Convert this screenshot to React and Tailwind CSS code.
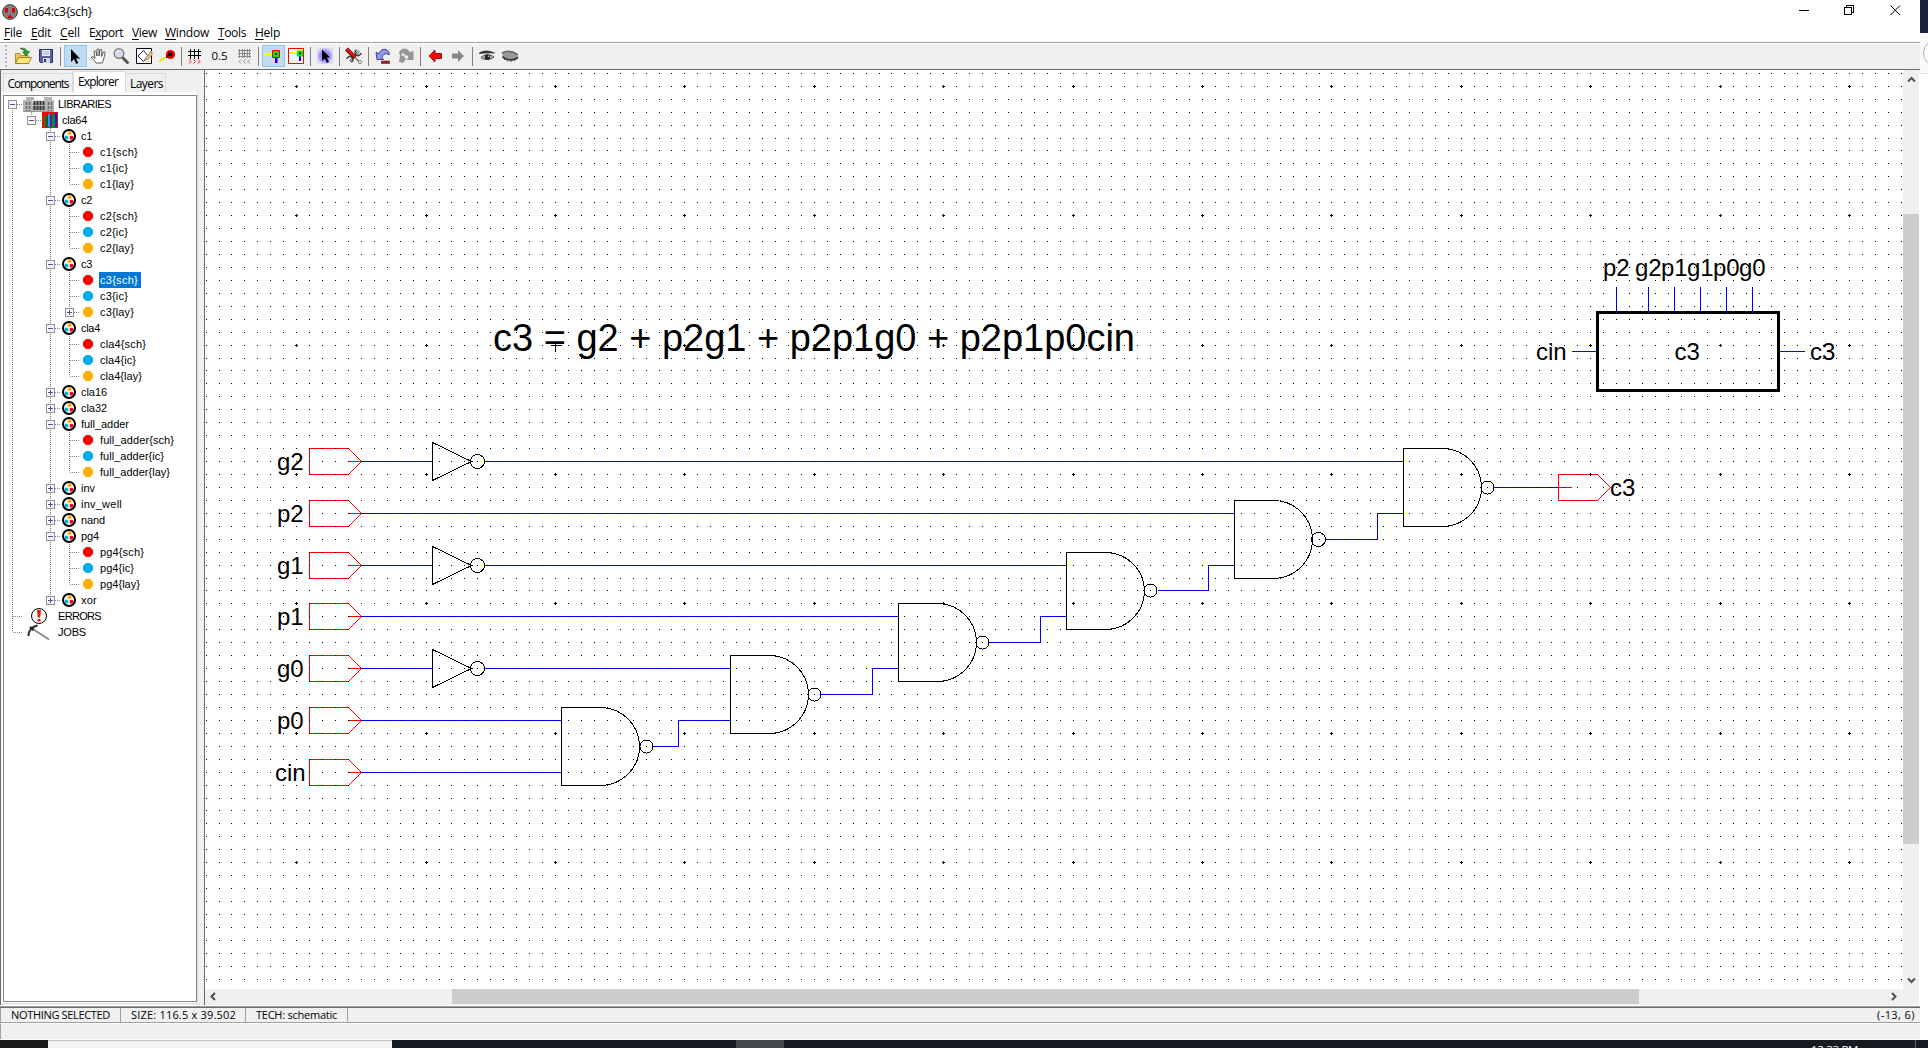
import { useLayoutEffect, useRef } from "react";

const UI = "font-['Open_Sans','Noto_Sans',sans-serif]";

/* Text whose tracking is tuned so that it spans a given width. */
function Fit({ w, className = "", children }) {
  const ref = useRef(null);
  useLayoutEffect(() => {
    const el = ref.current;
    el.style.letterSpacing = "0px";
    const n = el.textContent.length;
    const natural = el.getBoundingClientRect().width;
    el.style.letterSpacing = (w - natural) / n + "px";
  }, [w]);
  return (
    <span ref={ref} className={"inline-block whitespace-pre " + className}>
      {children}
    </span>
  );
}

/* ---------- toolbar ---------- */

function Ico({ children, size = 18 }) {
  return (
    <svg width={size} height={size} viewBox={`0 0 ${size} ${size}`} fill="none" className="shrink-0">
      {children}
    </svg>
  );
}

const OpenIcon = () => (
  <Ico>
    <path d="M1.500 16V6.500h4.500l1 2h7V16z" fill="#e8c94c" stroke="#9a7a20" strokeWidth=".8" />
    <path d="M1.500 16.500l3-6h13l-3 6z" fill="#ffe680" stroke="#8a6a10" strokeWidth=".8" />
    <path d="M6 1.500c4-1 6.500.5 7 3h2.500L12 9 8.500 5H11c-.6-1.600-2-2.600-5-3.500z" fill="#2fa02f" stroke="#176317" strokeWidth=".7" />
  </Ico>
);
const SaveIcon = () => (
  <Ico>
    <path d="M2.500 2.500h13v13h-12l-1-1z" fill="#5a62a4" stroke="#2b3270" />
    <path d="M5 3h8v6H5z" fill="#eef0f8" />
    <path d="M6 5h6M6 7h6" stroke="#a0a6c8" />
    <path d="M6 11h7v5H6z" fill="#d4d7e6" />
    <path d="M7 12h2v3H7z" fill="#2b3270" />
  </Ico>
);
const PointerIcon = () => (
  <Ico>
    <path d="M5 2v13l3-3 2.200 5 2-1-2.200-4.500H14z" fill="#000" />
  </Ico>
);
const HandIcon = () => (
  <Ico>
    <path
      d="M6 16c-1-2-4-4.500-4.500-6 .8-.8 2 0 3.500 1.500L4 4.500c.8-1 1.700-.6 2 .5l1 4V2.500c.5-1 1.700-1 2 0V9l1-6c.7-1 1.800-.6 1.800.5L11.500 9.500 13.500 5c1-.8 1.800 0 1.500 1-.8 4-1.500 8-3 10z"
      fill="#fff"
      stroke="#333"
      strokeWidth=".8"
    />
  </Ico>
);
const ZoomIcon = () => (
  <Ico>
    <path d="M10.500 10.500l5 5" stroke="#555" strokeWidth="3" strokeLinecap="round" />
    <circle cx="7" cy="6.500" r="4.800" fill="#d3dcec" stroke="#808080" strokeWidth="1.400" />
    <path d="M4.500 5.500A3 3 0 0 1 7 3.500" stroke="#fff" strokeWidth="1.300" />
  </Ico>
);
const EditIcon = () => (
  <Ico>
    <path d="M1.500 1.500h15v15h-15z" fill="#fff" stroke="#000" />
    <path d="M3 9l5.500-5.500L13 9l-4.500 5.500z" fill="#fff" stroke="#1a237e" />
    <path d="M16.500 3.500l.8 4-4 5-3 1 .8-3z" fill="#e2b980" stroke="#8a6030" strokeWidth=".5" />
    <path d="M10.500 13.500l2-.8 2 2.300h-4z" fill="#f3e6a0" />
  </Ico>
);
const WireIcon = () => (
  <Ico>
    <path d="M1 14.500c2-.5 3.500-3.500 7-4" stroke="#f2e200" strokeWidth="2.200" />
    <circle cx="12.500" cy="7.500" r="4.600" fill="#f00" />
    <path d="M10 5.500h4.500v4H10z" fill="#000" />
    <path d="M8 9l2-1.500 1 3-3 .5z" fill="#700" />
  </Ico>
);
function GridIcon({ ink, marks, dense }) {
  return (
    <Ico size={16}>
      {dense ? (
        <path d="M1 2.500h13M1 5.500h13M1 8.500h13M2.500 1v9M5.500 1v9M7.500 1v9M10.500 1v9M12.500 1v9" stroke={ink} strokeWidth="1" />
      ) : (
        <path d="M1 3.500h13M1 7.500h13M3.500 1v10M7.500 1v10M11.500 1v10" stroke={ink} />
      )}
      <path
        d={dense ? "M4 11.500l-2 2 2 2M8.500 11.500l-2 2 2 2M13 11.500l-2 2 2 2" : "M2 11.500l2 2-2 2M6.500 11.500l2 2-2 2M11 11.500l2 2-2 2"}
        stroke={marks}
      />
    </Ico>
  );
}
const PinA = () => (
  <Ico>
    <path d="M0 6h9v2.500H0z" fill="#ff0" />
    <path d="M10 10h2.500v6H10z" fill="#00f" />
    <path d="M7.500 3.500h7v7h-7z" fill="#0e0" stroke="#e00" />
    <path d="M10 6h2v2h-2z" fill="#000" />
  </Ico>
);
const PinB = () => (
  <Ico>
    <path d="M1.500 1.500h15v15h-15z" fill="#f8f8f8" stroke="#e00" />
    <path d="M2 5h9v2H2z" fill="#ff0" />
    <path d="M12 9h2v5h-2z" fill="#00f" />
    <path d="M10 3.500h6v6h-6z" fill="#0e0" />
    <path d="M12 5.500h2v2h-2z" fill="#000" />
  </Ico>
);
const SpecialPointer = () => (
  <Ico>
    <defs>
      <radialGradient id="glow">
        <stop offset="0" stopColor="#6c6cff" />
        <stop offset=".75" stopColor="#a4a4fb" />
        <stop offset="1" stopColor="#dcdcf8" />
      </radialGradient>
    </defs>
    <path d="M1 1h16v16H1z" fill="url(#glow)" />
    <path d="M6 2.500v11.500l2.800-2.600 2.200 4.600 2-1-2.200-4.400H14z" fill="#000" />
  </Ico>
);
const ToolsIcon = () => (
  <Ico>
    <path d="M14 4L5 14.500" stroke="#555" strokeWidth="2.400" />
    <path d="M14 4L5 14.500" stroke="#eee" strokeWidth="1" />
    <path d="M11.500 3a3 3 0 1 0 4.500 3M6.500 15A3 3 0 1 0 2 12" stroke="#444" strokeWidth="1.600" />
    <path d="M1.500 2l8.500 8.500" stroke="#8b0000" strokeWidth="4" />
    <path d="M2 2l8 8" stroke="#e01818" strokeWidth="2" />
    <path d="M10 10.500l5 5" stroke="#666" strokeWidth="1.300" />
    <circle cx="15" cy="15" r="1.600" fill="#fff" stroke="#666" strokeWidth=".8" />
  </Ico>
);
const UndoIcon = () => (
  <Ico>
    <path d="M2 5.500l1 7h6.500L8 10.500C9 7 11.500 6 15.500 7.500 14.500 1 7.500.5 5 6.500z" fill="#8c9ae8" stroke="#2a2f86" strokeWidth=".9" />
    <path d="M7.500 14h8v2.500h-8z" fill="#a02030" stroke="#701020" strokeWidth=".6" />
  </Ico>
);
const RedoIcon = () => (
  <Ico>
    <path d="M2 5c4-5 9-4 10.500 0l4-1v9H9l2.500-2.500C10.500 7.500 8 7.500 7 9l2 3-3 4-4-1 1-6z" fill="#959595" />
    <circle cx="6" cy="7.500" r="1.600" fill="#e8e8e8" />
  </Ico>
);
const ArrowLeftIcon = () => (
  <Ico>
    <path d="M3 9l6-6v3.500h6.500v5H9V15z" fill="#f00" stroke="#8b0000" strokeWidth=".8" />
  </Ico>
);
const ArrowRightIcon = () => (
  <Ico>
    <path d="M15 9L9 3v3.500H3v5h6V15z" fill="#888" />
  </Ico>
);
const EyeIcon = () => (
  <Ico>
    <path d="M1 6.500C5 3 11 3.500 16.500 6 11 5.800 6 5.800 1 6.500z" fill="#333" stroke="#333" strokeWidth=".8" />
    <path d="M3 10.500c3-3 9-3.500 13-.5-3 3-10 3.500-13 .5z" fill="#bbb" stroke="#444" strokeWidth="1" />
    <circle cx="9.500" cy="10" r="2.700" fill="#222" />
    <circle cx="10.500" cy="9.200" r=".8" fill="#eee" />
  </Ico>
);
const EyeClosedIcon = () => (
  <Ico>
    <path d="M1 6c5-3 12-2 16 2v2.500c-3 3.500-12 4-15 0z" fill="#9a9a9a" />
    <path d="M1 6c5-2.500 11-1.500 15.500 1.500" stroke="#666" strokeWidth="1.600" />
    <path d="M1.500 9.500c3 4 11 4.500 15.500 1" stroke="#333" strokeWidth="1.600" />
    <path d="M4 12l-.5 1M7 13l-.5 1.500M10 13.500v1.500M13 13l.5 1.200" stroke="#444" />
  </Ico>
);

const Sep = () => <div className="h-[19px] w-px bg-[#808080]" />;
const Pressed = ({ children }) => (
  <div className="flex h-[22px] w-[23px] items-center justify-center border border-[#90c8f6] bg-[#c0dcf3]">{children}</div>
);
const Grip = () => (
  <div className="grid gap-[2px]">
    {Array.from({ length: 6 }, (_, i) => (
      <div key={i} className="h-[2px] w-[2px] bg-[#b8b8b8]" />
    ))}
  </div>
);

function Toolbar() {
  const items = [
    ["w-[11px]", <Grip />],
    ["w-[23px]", <OpenIcon />],
    ["w-[23px]", <SaveIcon />],
    ["w-[6px] pl-px", <Sep />],
    ["w-[24px]", <Pressed><PointerIcon /></Pressed>],
    ["w-[23px]", <HandIcon />],
    ["w-[22px]", <ZoomIcon />],
    ["w-[23px]", <EditIcon />],
    ["w-[24px]", <WireIcon />],
    ["w-[5px]", <Sep />],
    ["w-[21px]", <GridIcon ink="#000" marks="#f00" />],
    ["w-[29px]", <Fit w={16} className="text-[11.5px]">0.5</Fit>],
    ["w-[21px]", <GridIcon ink="#8a8a8a" marks="#8a8a8a" dense />],
    ["w-[7px]", <Sep />],
    ["w-[23px]", <Pressed><PinA /></Pressed>],
    ["w-[22px]", <PinB />],
    ["w-[6px] pl-px", <Sep />],
    ["w-[24px]", <SpecialPointer />],
    ["w-[5px]", <Sep />],
    ["w-[24px]", <ToolsIcon />],
    ["w-[5px]", <Sep />],
    ["w-[23px]", <UndoIcon />],
    ["w-[24px]", <RedoIcon />],
    ["w-[5px]", <Sep />],
    ["w-[23px]", <ArrowLeftIcon />],
    ["w-[24px]", <ArrowRightIcon />],
    ["w-[5px]", <Sep />],
    ["w-[23px]", <EyeIcon />],
    ["w-[23px]", <EyeClosedIcon />],
  ];
  return (
    <div className="flex h-[25px] shrink-0 items-center bg-[#f0f0f0] pb-px">
      {items.map(([w, el], i) => (
        <div key={i} className={w + " flex shrink-0 items-center justify-center"}>
          {el}
        </div>
      ))}
    </div>
  );
}

/* ---------- title and menu ---------- */

function TitleBar() {
  return (
    <div className="flex h-[23px] shrink-0 items-start justify-between">
      <div className="flex h-[23px] items-center pl-[2px]">
        <svg width="16" height="16" viewBox="0 0 16 16" className="shrink-0">
          <circle cx="8" cy="8" r="7.400" fill="#808080" stroke="#333" strokeWidth=".9" />
          <path d="M3 4h3v4.500H3zM10 4h3v4.500h-3zM6 12h4v2H6z" fill="#e00000" />
          <path d="M7 11h2v2H7z" fill="#e00000" />
        </svg>
        <Fit w={69} className="ml-[5px] pt-px text-[12px]">cla64:c3{"{"}sch{"}"}</Fit>
      </div>
      <svg width="102" height="20" viewBox="0 0 102 20" fill="none" stroke="#000" className="mr-[19px]">
        <path d="M0 10.500h10M45.500 7.500h7v7h-7zM47.500 7.500v-2h7v7h-2" shapeRendering="crispEdges" />
        <path d="M91.500 5.500l9.500 9.500M101 5.500L91.500 15" />
      </svg>
    </div>
  );
}

function MenuBar() {
  const menus = [
    ["File", 18, "w-[27px]"],
    ["Edit", 20, "w-[29px]"],
    ["Cell", 20, "w-[29px]"],
    ["Export", 34, "w-[43px]"],
    ["View", 25, "w-[33px]"],
    ["Window", 44, "w-[53px]"],
    ["Tools", 28, "w-[37px]"],
    ["Help", 25, "w-[37px]"],
  ];
  return (
    <div className="flex h-[19px] shrink-0 items-center pt-px pl-[4px] text-[12px]">
      {menus.map(([label, w, cell]) => {
        const k = label === "Export" ? 1 : 0;
        return (
          <div key={label} className={cell + " shrink-0 leading-[18px]"}>
            <Fit w={w}>
              {label.slice(0, k)}
              <span className="underline underline-offset-2">{label[k]}</span>
              {label.slice(k + 1)}
            </Fit>
          </div>
        );
      })}
    </div>
  );
}

/* ---------- explorer tree ---------- */

const GUIDES = {
  v: "M9.500 0V16",
  t: "M9.500 0V16M10 8.500H19",
  l: "M9.500 0V8M10 8.500H19",
  s: "M9.500 8V16M10 8.500H19",
};

function Guide({ kind, box }) {
  return (
    <svg width="19" height="16" viewBox="0 0 19 16" fill="none" className="shrink-0" shapeRendering="crispEdges">
      {GUIDES[kind] && <path d={GUIDES[kind]} stroke="#808080" strokeDasharray="1 1" />}
      {box && (
        <>
          <rect x="5.500" y="4.500" width="8" height="8" fill="#f6f6f6" stroke="#919191" />
          <path d={box === "+" ? "M7 8.500h5M9.500 6v5" : "M7 8.500h5"} stroke="#4457a0" />
        </>
      )}
    </svg>
  );
}

function LibrariesIcon() {
  return (
    <svg width="37" height="16" viewBox="0 0 37 16" className="shrink-0">
      <path d="M1 4h31v12H1zM4 1h8v4H4zM22 1h8v4h-8z" fill="#b4b4b4" />
      <path d="M10 4h13v3H10z" fill="#ddd" />
      <path d="M4.500 6v9M7.500 6v9M26.500 6v9M29.500 6v9" stroke="#666" strokeWidth="1.500" strokeDasharray="3 1" />
      <path d="M12.500 5v9M15.500 5v9M18.500 5v9M21.500 5v9" stroke="#333" strokeWidth="2" strokeDasharray="4 1" />
      <path d="M1 15.500h31" stroke="#999" />
    </svg>
  );
}
function BooksIcon() {
  return (
    <svg width="22" height="16" viewBox="0 0 22 16" className="shrink-0" shapeRendering="crispEdges">
      <path d="M1 0h16v16H1z" fill="#f00" />
      <path d="M2 3h3v12H2z" fill="#7a4a10" />
      <path d="M5 4h2v11H5z" fill="#0a5a3a" />
      <path d="M7 2h2v13H7z" fill="#18a0e0" />
      <path d="M9 3h2v12H9z" fill="#6a10a0" />
      <path d="M11 2h3v13h-3z" fill="#0a8a2a" />
      <path d="M14 1h2v14h-2z" fill="#0a20e0" />
    </svg>
  );
}
function CellIcon() {
  return (
    <svg width="22" height="16" viewBox="0 0 22 16" className="shrink-0">
      <circle cx="9" cy="8" r="6" fill="#fff" stroke="#000" strokeWidth="2" />
      <circle cx="9.500" cy="5.300" r="2" fill="#ffb000" />
      <circle cx="6.500" cy="9.500" r="2" fill="#00aeef" />
      <circle cx="11.500" cy="9.800" r="2" fill="#f00" />
    </svg>
  );
}
function Dot({ color }) {
  return (
    <svg width="22" height="16" viewBox="0 0 22 16" className="shrink-0">
      <path d="M7 3h4l1 1 2 2v4l-2 2-1 1H7l-1-1-2-2V6l2-2z" fill={color} />
    </svg>
  );
}
function ErrorIcon() {
  return (
    <svg width="37" height="16" viewBox="0 0 37 16" className="shrink-0 overflow-visible">
      <circle cx="17" cy="8" r="7.500" fill="#fff" stroke="#000" />
      <path d="M15 2h4l-.8 7.500h-2.400zM15.500 11h3v2.500h-3z" fill="#f01808" />
    </svg>
  );
}
function JobsIcon() {
  return (
    <svg width="37" height="16" viewBox="0 0 37 16" fill="none" className="shrink-0 overflow-visible">
      <path d="M10 4.500l17 11" stroke="#85887c" strokeWidth="1.700" />
      <path d="M6.500 12c0-5 2.500-9 9-10.500" stroke="#1f2b33" strokeWidth="2" />
      <path d="M8 3l3.500 3" stroke="#1f2b33" strokeWidth="2.500" />
    </svg>
  );
}

const VIEWS = [["sch", "#ff0000"], ["ic", "#00aeef"], ["lay", "#ffb000"]];
const CELLS = [
  { name: "c1", w: 11, vw: [38, 28, 34], open: true },
  { name: "c2", w: 11, vw: [38, 28, 34], open: true },
  { name: "c3", w: 11, vw: [38, 28, 34], open: true, selected: "sch", expandable: "lay" },
  { name: "cla4", w: 19, vw: [46, 36, 42], open: true },
  { name: "cla16", w: 26 },
  { name: "cla32", w: 26 },
  { name: "full_adder", w: 48, vw: [74, 64, 70], open: true },
  { name: "inv", w: 14 },
  { name: "inv_well", w: 41 },
  { name: "nand", w: 24 },
  { name: "pg4", w: 18, vw: [44, 34, 40], open: true },
  { name: "xor", w: 16 },
];

function Row({ guides, icon, label, w, selected }) {
  return (
    <div className="flex h-4 items-center">
      {guides.map(([kind, box], i) => (
        <Guide key={i} kind={kind} box={box} />
      ))}
      {icon}
      <div className={selected ? "-ml-[2px] h-4 w-[42px] bg-[#0078d7] pl-px leading-[17px] text-white" : "-ml-px h-4 leading-[17px]"}>
        <Fit w={w}>{label}</Fit>
      </div>
    </div>
  );
}

function Tree() {
  const rows = [
    <Row key="libs" guides={[["s", "-"]]} icon={<LibrariesIcon />} label="LIBRARIES" w={53} />,
    <Row key="lib" guides={[["v"], ["l", "-"]]} icon={<BooksIcon />} label="cla64" w={25} />,
  ];
  CELLS.forEach((cell, ci) => {
    const last = ci === CELLS.length - 1;
    rows.push(
      <Row
        key={cell.name}
        guides={[["v"], [""], [last ? "l" : "t", cell.open ? "-" : "+"]]}
        icon={<CellIcon />}
        label={cell.name}
        w={cell.w}
      />
    );
    if (!cell.open) return;
    VIEWS.forEach(([view, color], vi) => {
      rows.push(
        <Row
          key={cell.name + view}
          guides={[["v"], [""], ["v"], [vi === 2 ? "l" : "t", cell.expandable === view ? "+" : undefined]]}
          icon={<Dot color={color} />}
          label={`${cell.name}{${view}}`}
          w={cell.vw[vi]}
          selected={cell.selected === view}
        />
      );
    });
  });
  rows.push(<Row key="err" guides={[["t"]]} icon={<ErrorIcon />} label="ERRORS" w={43} />);
  rows.push(<Row key="jobs" guides={[["l"]]} icon={<JobsIcon />} label="JOBS" w={28} />);
  return (
    <div className="h-[907px] w-[194px] overflow-hidden border border-[#828790] bg-white font-['Liberation_Sans',Arial,sans-serif] text-[11px]">
      <div className="-ml-px">{rows}</div>
    </div>
  );
}

function Sidebar() {
  return (
    <div className="flex w-[204px] shrink-0 border-l border-[#696969] bg-[#f0f0f0]">
      <div className="flex w-[197px] flex-col pt-px">
        <div className="flex h-[21px] items-end pl-[2px] text-[12px]">
          <div className="flex h-[19px] w-[70px] items-center justify-center border border-b-0 border-[#d9d9d9] pt-[2px]">
            <Fit w={61}>Components</Fit>
          </div>
          <div className="flex h-[21px] w-[53px] items-center border border-b-0 border-[#d9d9d9] bg-white pl-[4px]">
            <Fit w={40}>Explorer</Fit>
          </div>
          <div className="flex h-[19px] w-[40px] items-center border border-b-0 border-l-0 border-[#d9d9d9] pt-[2px] pl-[4px]">
            <Fit w={33}>Layers</Fit>
          </div>
        </div>
        <div className="h-[912px] border-r border-b border-[#dcdcdc] bg-white pt-[3px] pl-[2px]">
          <Tree />
        </div>
      </div>
    </div>
  );
}

/* ---------- schematic ---------- */

const GX = 296.2;
const GY = 85.78;
const PITCH = 12.941;

function gridPath(major) {
  let d = "";
  for (let i = -7; i <= 124; i++) {
    for (let j = -1; j <= 69; j++) {
      const x = Math.round(GX + i * PITCH);
      const y = Math.round(GY + j * PITCH);
      const big = i % 10 === 0 && j % 10 === 0;
      if (big && major) d += `M${x - 1} ${y}h3v1h-3zM${x} ${y - 1}h1v3h-1z`;
      if (!big && !major) d += `M${x} ${y}h1v1h-1z`;
    }
  }
  return d;
}
const MINOR = gridPath(false);
const MAJOR = gridPath(true);

const INPUTS = [
  ["g2", 461, 1403, true, 277.5],
  ["p2", 513, 1234, false, 277.5],
  ["g1", 565, 1066, true, 277.5],
  ["p1", 616, 898, false, 277.5],
  ["g0", 668, 730, true, 277.5],
  ["p0", 720, 561, false, 277.5],
  ["cin", 772, 561, false, 275.5],
];
/* left, top, output y, bottom, bubble centre, bubble radius */
const GATES = [
  [561, 707, 746, 785, 646, 6.5],
  [730, 655, 694, 733, 814, 6.5],
  [898, 603, 642, 681, 982, 6.5],
  [1066, 552, 590, 629, 1150, 6.5],
  [1234, 500, 539, 578, 1318, 7],
  [1403, 448, 487, 526, 1487, 6.5],
];
const STEPS = [
  [652, 746, 678, 720, 730],
  [820, 694, 872, 668, 898],
  [988, 642, 1040, 616, 1066],
  [1157, 590, 1208, 565, 1234],
  [1325, 539, 1377, 513, 1403],
];

function Schematic() {
  return (
    <svg width="1698" height="919" viewBox="205 70 1698 919" className="block shrink-0 bg-white font-['Liberation_Sans',Arial,sans-serif]" fill="none">
      <g transform="translate(.5 .5)" shapeRendering="crispEdges">
        <g stroke="#0000ff">
          {INPUTS.map(([n, y, end, inv]) => (
            <path key={n} d={inv ? `M361 ${y}H432M484 ${y}H${end}` : `M361 ${y}H${end}`} />
          ))}
          <path d="M1493 487H1558" />
          {STEPS.map(([x, y, m, y2, e], i) => (
            <path key={i} d={`M${x} ${y}H${m}V${y2}H${e}`} />
          ))}
          <path d="M1571 351H1597M1778 351H1804" />
        </g>
        <g stroke="#000">
          {GATES.map(([x, t, m, b, cx, r]) => (
            <g key={x}>
              <path d={`M${x + 39} ${t}H${x}V${b}H${x + 39}A39 ${(b - t) / 2} 0 0 0 ${x + 39} ${t}`} />
              <circle cx={cx} cy={m} r={r} />
            </g>
          ))}
          {INPUTS.filter((p) => p[3]).map(([n, y]) => (
            <g key={n}>
              <path d={`M432 ${y - 19}V${y + 19}L471 ${y}Z`} />
              <circle cx="477" cy={y} r="7" />
            </g>
          ))}
          <path d="M1597 312H1778V390H1597Z" strokeWidth="3" />
        </g>
        <path d="M1616 286V312M1648 286V312M1674 286V312M1700 286V312M1726 286V312M1752 286V312" stroke="#0000ff" />
        <g stroke="#ff0000">
          {INPUTS.map(([n, y]) => (
            <path key={n} d={`M309 ${y - 13}H348L361 ${y}L348 ${y + 13}H309ZM348 ${y}H361`} />
          ))}
          <path d="M1558 474H1597L1610 487L1597 500H1558ZM1558 487H1571" />
        </g>
        <path d="M550 345H561M555 340V351" stroke="#000" />
      </g>
      <path d={MINOR} fill="#000" shapeRendering="crispEdges" />
      <path d={MAJOR} fill="#000" shapeRendering="crispEdges" />
      <g fill="#000" fontSize="24">
        {INPUTS.map(([n, y, , , x]) => (
          <text key={n} x={x - 0.5} y={y + 9}>{n}</text>
        ))}
        <text x="1610" y="496">c3</text>
        <text x="1603" y="276">p2</text>
        <text x="1635" y="276">g2</text>
        <text x="1661" y="276">p1</text>
        <text x="1687" y="276">g1</text>
        <text x="1713" y="276">p0</text>
        <text x="1739" y="276">g0</text>
        <text x="1536" y="360">cin</text>
        <text x="1674.500" y="360">c3</text>
        <text x="1810" y="360">c3</text>
        <text x="493" y="351" fontSize="38" textLength="642">c3 = g2 + p2g1 + p2p1g0 + p2p1p0cin</text>
      </g>
    </svg>
  );
}

const Chevron = ({ d }) => (
  <svg width="15" height="15" viewBox="0 0 15 15" fill="none" stroke="#505050" strokeWidth="2" className="shrink-0">
    <path d={d} />
  </svg>
);

function Canvas() {
  return (
    <div className="flex grow flex-col border-l border-[#696969]">
      <div className="flex h-[919px]">
        <Schematic />
        <div className="flex w-4 flex-col items-center justify-between bg-[#f0f0f0] pt-[2px]">
          <Chevron d="M4 9.500l3.500-3.500 3.500 3.500" />
          <div className="mt-[127px] h-[630px] w-full shrink-0 bg-[#cdcdcd]" />
          <div className="grow" />
          <Chevron d="M4 4.500l3.500 3.500 3.500-3.500" />
        </div>
      </div>
      <div className="flex h-4 w-[1714px] items-center bg-[#f0f0f0] pb-px">
        <Chevron d="M10 4l-3.500 3.500 3.500 3.500" />
        <div className="ml-[232px] h-[15px] w-[1187px] bg-[#cdcdcd]" />
        <div className="grow" />
        <div className="mr-[18px] flex">
          <Chevron d="M6 4l3.500 3.500L6 11" />
        </div>
      </div>
    </div>
  );
}

/* ---------- status and surroundings ---------- */

function StatusBar() {
  const cell = "flex h-full shrink-0 items-center border-r border-[#a0a0a0]";
  return (
    <>
      <div className="flex h-[15px] shrink-0 items-center border-b border-l border-[#a0a0a0] bg-[#f0f0f0] text-[11px] leading-[14px]">
        <div className={cell + " w-[120px] pl-[10px]"}><Fit w={99}>NOTHING SELECTED</Fit></div>
        <div className={cell + " w-[125px] pl-[10px]"}><Fit w={105}>SIZE: 116.5 x 39.502</Fit></div>
        <div className={cell + " w-[102px] pl-[10px]"}><Fit w={81}>TECH: schematic</Fit></div>
        <div className="grow" />
        <div className="mr-[5px]"><Fit w={38}>(-13, 6)</Fit></div>
      </div>
      <div className="h-[16px] shrink-0 border-t border-l border-t-white border-l-[#a0a0a0] bg-[#f0f0f0]" />
      <div className="h-px shrink-0 bg-white" />
    </>
  );
}

function Taskbar() {
  return (
    <div className="flex h-2 w-full shrink-0 overflow-hidden bg-[#171b22]">
      <div className="w-12 bg-[#1a1a1a]" />
      <div className="w-[344px] border-t border-[#c4c4c4] bg-[#f2f2f2]" />
      <div className="w-[344px]" />
      <div className="w-[48px] bg-[#45484d]" />
      <div className="grow" />
      <div className="w-[104px] pt-[2px] text-[11.500px] leading-[15px] text-white">
        <Fit w={47}>12:33 PM</Fit>
      </div>
      <div className="w-[13px] border-l border-[#606468]" />
    </div>
  );
}

export default function App() {
  return (
    <div className={"flex h-[1048px] w-[1928px] flex-col overflow-hidden bg-white text-black " + UI}>
      <div className="flex h-[1040px] shrink-0">
        <div className="flex w-[1920px] flex-col">
          <TitleBar />
          <MenuBar />
          <div className="h-px shrink-0 bg-[#a0a0a0]" />
          <div className="h-px shrink-0 bg-white" />
          <Toolbar />
          <div className="h-px shrink-0 bg-[#696969]" />
          <div className="flex h-[935px] shrink-0">
            <Sidebar />
            <Canvas />
          </div>
          <div className="h-px shrink-0 bg-white" />
          <div className="h-px shrink-0 bg-[#a0a0a0]" />
          <div className="h-px shrink-0 bg-[#696969]" />
          <StatusBar />
        </div>
        <div className="flex w-2 flex-col">
          <div className="h-[33px] bg-[#1c2340]" />
          <div className="h-[41px] overflow-hidden border-b border-[#dedede] bg-[#fafafa] pt-[6px] pl-[3px]">
            <div className="h-[28px] w-[28px] rounded-full border border-[#b0b0b0] bg-white" />
          </div>
        </div>
      </div>
      <Taskbar />
    </div>
  );
}
